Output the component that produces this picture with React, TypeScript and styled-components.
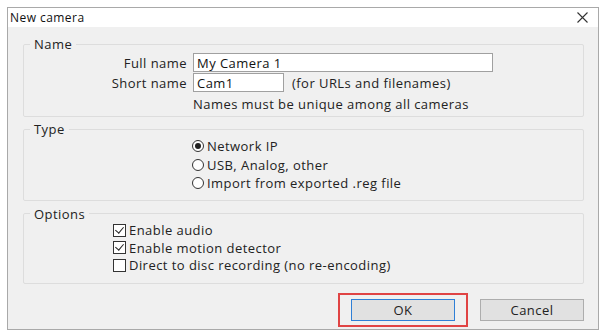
import styled, { createGlobalStyle } from 'styled-components'

const GlobalStyle = createGlobalStyle`
    html, body {
        margin: 0;
        padding: 0;
        background: #ffffff;
    }
    body {
        font-family: "Open Sans", "Noto Sans", "Liberation Sans", sans-serif;
        font-size: 13px;
        letter-spacing: 0.45px;
        color: #222222;
    }
`

function CloseIcon() {
    return (
        <svg width="11" height="11" viewBox="0 0 11 11">
            <path d="M0.5 0.5 L10.5 10.5 M10.5 0.5 L0.5 10.5" stroke="#333" strokeWidth="1.1" fill="none" />
        </svg>
    )
}

function App() {
    return (
        <>
            <GlobalStyle />
            <Window>
                <TitleBar>
                    <TitleText>New camera</TitleText>
                    <CloseButton><CloseIcon /></CloseButton>
                </TitleBar>
                <Body>
                    <Group>
                        <Legend>Name</Legend>
                        <NameGrid>
                            <FieldLabel>Full name</FieldLabel>
                            <FieldCell>
                                <TextInput $width={300} defaultValue="My Camera 1" />
                            </FieldCell>
                            <FieldLabel>Short name</FieldLabel>
                            <FieldCell>
                                <TextInput $width={91} defaultValue="Cam1" />
                                <Hint>(for URLs and filenames)</Hint>
                            </FieldCell>
                            <span />
                            <Note>Names must be unique among all cameras</Note>
                        </NameGrid>
                    </Group>
                    <Group $gap={4}>
                        <Legend>Type</Legend>
                        <OptionList $indent={168} $rowHeight={18.5} $top={0} $bottom={3}>
                            <OptionRow>
                                <Radio $checked />
                                Network IP
                            </OptionRow>
                            <OptionRow>
                                <Radio />
                                USB, Analog, other
                            </OptionRow>
                            <OptionRow>
                                <Radio />
                                Import from exported .reg file
                            </OptionRow>
                        </OptionList>
                    </Group>
                    <Group $gap={5}>
                        <Legend>Options</Legend>
                        <OptionList $indent={89} $rowHeight={17.5} $top={0} $bottom={5}>
                            <OptionRow>
                                <Check $checked />
                                Enable audio
                            </OptionRow>
                            <OptionRow>
                                <Check $checked />
                                Enable motion detector
                            </OptionRow>
                            <OptionRow>
                                <Check />
                                Direct to disc recording (no re-encoding)
                            </OptionRow>
                        </OptionList>
                    </Group>
                    <ButtonRow>
                        <Highlight>
                            <DialogButton $primary>OK</DialogButton>
                        </Highlight>
                        <DialogButton>Cancel</DialogButton>
                    </ButtonRow>
                </Body>
            </Window>
        </>
    )
}

const Window = styled.div`
    margin: 7px 0 0 7px;
    width: 590px;
    height: 321px;
    border: 1px solid #a9a9a9;
    background: #f0f0f0;
    display: flex;
    flex-direction: column;
`
const TitleBar = styled.div`
    height: 19px;
    background: #ffffff;
    display: flex;
    align-items: center;
    justify-content: space-between;
    padding: 0 10px 0 2px;
`
const TitleText = styled.div`
    font-size: 12px;
    color: #111;
`
const CloseButton = styled.div`
    display: flex;
    align-items: center;
`
const Body = styled.div`
    flex: 1;
    display: flex;
    flex-direction: column;
    padding: 9px 14px 0 15px;
`
const Group = styled.fieldset<{ $gap?: number }>`
    margin: ${p => p.$gap ?? 0}px 0 0 0;
    padding: 0 0 4px 0;
    border: 1px solid #dddddd;
    border-radius: 2px;
    min-width: 0;
`
const Legend = styled.legend`
    margin-left: 6px;
    padding: 0 4px;
    line-height: 16px;
    color: #222;
`
const NameGrid = styled.div`
    display: grid;
    grid-template-columns: 163px 1fr;
    grid-auto-rows: 19px;
    column-gap: 6px;
    row-gap: 1px;
    align-items: center;
    margin-top: 1px;
`
const FieldLabel = styled.div`
    text-align: right;
`
const FieldCell = styled.div`
    display: flex;
    align-items: center;
    gap: 8px;
`
const TextInput = styled.input<{ $width: number }>`
    box-sizing: border-box;
    width: ${p => p.$width}px;
    height: 19px;
    border: 1px solid #a0a0a0;
    background: #fff;
    padding: 0 3px;
    font: inherit;
    letter-spacing: inherit;
    color: #111;
    outline: none;
`
const Hint = styled.span`
    color: #222;
`
const Note = styled.div`
    line-height: 19px;
    margin-top: 3px;
`
const OptionList = styled.div<{ $indent: number; $rowHeight: number; $top: number; $bottom: number }>`
    display: grid;
    grid-auto-rows: ${p => p.$rowHeight}px;
    padding: ${p => p.$top}px 0 ${p => p.$bottom}px ${p => p.$indent}px;
`
const OptionRow = styled.label`
    display: flex;
    align-items: center;
    gap: 3px;
`
const Radio = styled.span<{ $checked?: boolean }>`
    box-sizing: border-box;
    width: 12px;
    height: 12px;
    border-radius: 50%;
    border: 1px solid #333;
    background: #fff;
    display: flex;
    align-items: center;
    justify-content: center;
    &::after {
        content: '';
        width: 6px;
        height: 6px;
        border-radius: 50%;
        background: ${p => (p.$checked ? '#222' : 'transparent')};
    }
`
const Check = styled.span<{ $checked?: boolean }>`
    box-sizing: border-box;
    width: 13px;
    height: 13px;
    border: 1px solid #333;
    background: #fff;
    position: relative;
    &::after {
        content: '';
        display: ${p => (p.$checked ? 'block' : 'none')};
        position: absolute;
        left: 3px;
        top: 0px;
        width: 4px;
        height: 7px;
        border-right: 1.3px solid #222;
        border-bottom: 1.3px solid #222;
        transform: rotate(40deg);
    }
`
const ButtonRow = styled.div`
    display: flex;
    justify-content: flex-end;
    align-items: center;
    gap: 12px;
    margin-top: 9px;
`
const Highlight = styled.div`
    border: 2px solid #e04444;
    padding: 4px 11px;
    display: flex;
`
const DialogButton = styled.button<{ $primary?: boolean }>`
    box-sizing: border-box;
    width: 104px;
    height: 22px;
    background: #e1e1e1;
    border: 1px solid ${p => (p.$primary ? '#2f7fd6' : '#adadad')};
    font: inherit;
    letter-spacing: inherit;
    color: #222;
    padding: 0;
`

export default App;
